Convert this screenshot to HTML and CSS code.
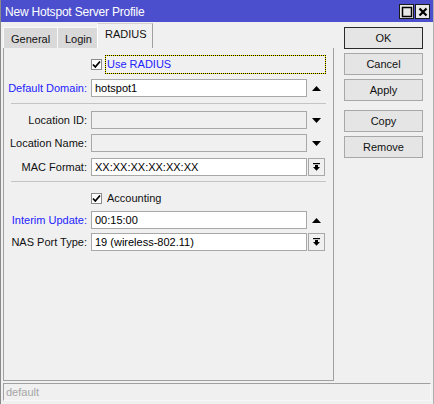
FILE: index.html
```html
<!DOCTYPE html>
<html>
<head>
<meta charset="utf-8">
<link rel="stylesheet" href="styles.css">
</head>
<body>
<div class="window">
  <div class="titlebar">
    <span class="title">New Hotspot Server Profile</span>
    <div class="tbtns">
      <span class="tbtn"><svg width="12" height="12" viewBox="0 0 12 12"><rect x="1.5" y="1.5" width="9" height="9" fill="none" stroke="#000" stroke-width="1.5"/></svg></span>
      <span class="tbtn"><svg width="12" height="12" viewBox="0 0 12 12"><path d="M2.5 2.5 L9.5 9.5 M9.5 2.5 L2.5 9.5" stroke="#000" stroke-width="2.2"/></svg></span>
    </div>
  </div>
  <div class="main">
    <div class="left">
      <div class="tabs">
        <div class="tab">General</div>
        <div class="tab">Login</div>
        <div class="tab active">RADIUS</div>
      </div>
      <div class="panel">
        <div class="row chkrow first">
          <span class="box"><svg width="9" height="9" viewBox="0 0 9 9"><path d="M1 4.5 L3.3 7 L8 1.5" fill="none" stroke="#000" stroke-width="1.8"/></svg></span>
          <span class="focus">Use RADIUS</span>
        </div>
        <div class="row r-dd">
          <label class="lbl blue">Default Domain:</label>
          <div class="field">hotspot1</div>
          <span class="icon"><svg width="9" height="5" viewBox="0 0 9 5"><polygon points="0,5 9,5 4.5,0" fill="#000"/></svg></span>
        </div>
        <div class="sep"></div>
        <div class="row r-lid">
          <label class="lbl">Location ID:</label>
          <div class="field dis"></div>
          <span class="icon"><svg width="9" height="5" viewBox="0 0 9 5"><polygon points="0,0 9,0 4.5,5" fill="#000"/></svg></span>
        </div>
        <div class="row r-lname">
          <label class="lbl">Location Name:</label>
          <div class="field dis"></div>
          <span class="icon"><svg width="9" height="5" viewBox="0 0 9 5"><polygon points="0,0 9,0 4.5,5" fill="#000"/></svg></span>
        </div>
        <div class="row r-mac">
          <label class="lbl">MAC Format:</label>
          <div class="field">XX:XX:XX:XX:XX:XX</div>
          <span class="icon dbtn"><svg width="7" height="8" viewBox="0 0 7 8"><rect x="0" y="0" width="7" height="1.2" fill="#000"/><rect x="2" y="2" width="3" height="2" fill="#000"/><polygon points="0,4 7,4 3.5,7.8" fill="#000"/></svg></span>
        </div>
        <div class="sep sep2"></div>
        <div class="row chkrow r-acc">
          <span class="box"><svg width="9" height="9" viewBox="0 0 9 9"><path d="M1 4.5 L3.3 7 L8 1.5" fill="none" stroke="#000" stroke-width="1.8"/></svg></span>
          <span class="plain">Accounting</span>
        </div>
        <div class="row r-int">
          <label class="lbl blue">Interim Update:</label>
          <div class="field">00:15:00</div>
          <span class="icon"><svg width="9" height="5" viewBox="0 0 9 5"><polygon points="0,5 9,5 4.5,0" fill="#000"/></svg></span>
        </div>
        <div class="row r-nas">
          <label class="lbl">NAS Port Type:</label>
          <div class="field">19 (wireless-802.11)</div>
          <span class="icon dbtn"><svg width="7" height="8" viewBox="0 0 7 8"><rect x="0" y="0" width="7" height="1.2" fill="#000"/><rect x="2" y="2" width="3" height="2" fill="#000"/><polygon points="0,4 7,4 3.5,7.8" fill="#000"/></svg></span>
        </div>
      </div>
    </div>
    <div class="buttons">
      <div class="btn default">OK</div>
      <div class="btn">Cancel</div>
      <div class="btn">Apply</div>
      <div class="btn gapped">Copy</div>
      <div class="btn">Remove</div>
    </div>
  </div>
  <div class="status">default</div>
</div>
</body>
</html>
```

FILE: styles.css
```css
html, body {
  margin: 0;
  padding: 0;
  background: #f0f0f0;
}
body {
  font-family: "Liberation Sans", Arial, sans-serif;
  font-size: 11px;
  color: #000;
}
.window {
  width: 434px;
  height: 404px;
  box-sizing: border-box;
  border-left: 1px solid #8a8a8a;
  border-right: 1px solid #b0b0b0;
  display: flex;
  flex-direction: column;
  overflow: hidden;
}
.titlebar {
  height: 22px;
  background: #4c4fcd;
  display: flex;
  align-items: center;
  justify-content: space-between;
  padding-left: 5px;
  padding-right: 4px;
  margin-left: -1px;
  margin-right: -1px;
}
.title {
  color: #fff;
  font-size: 12px;
  letter-spacing: -0.2px;
  margin-top: 1px;
}
.tbtns {
  display: flex;
  gap: 1px;
  margin-top: 1px;
}
.tbtn {
  width: 13px;
  height: 13px;
  background: #e8e8e8;
  border: 1px solid #1a1a1a;
  display: flex;
  align-items: center;
  justify-content: center;
}
.main {
  display: flex;
  flex: 1;
}
.left {
  margin-left: 2px;
  width: 331px;
  display: flex;
  flex-direction: column;
}
.tabs {
  display: flex;
  height: 25px;
  margin-top: 1px;
  align-items: flex-end;
}
.tab {
  height: 21px;
  box-sizing: border-box;
  background: #d9d9d9;
  border-left: 1px solid #f8f8f8;
  border-top: 1px solid #f8f8f8;
  padding: 0 6px 0 7px;
  display: flex;
  align-items: center;
  padding-top: 2px;
  color: #111;
}
.tab:first-child {
  width: 54px;
}
.tab:nth-child(2) {
  width: 40px;
}
.tab.active {
  height: 25px;
  width: 56px;
  background: #f0f0f0;
  border-left: 1px solid #ffffff;
  border-top: 1px solid #d0d0d0;
  border-right: 1px solid #a0a0a0;
  padding-top: 0;
  padding-bottom: 4px;
  padding-left: 7px;
}
.panel {
  height: 333px;
  box-sizing: border-box;
  border-left: 1px solid #a0a0a0;
  border-right: 1px solid #a0a0a0;
  border-bottom: 1px solid #a0a0a0;
  display: flex;
  flex-direction: column;
}
.row {
  display: flex;
  align-items: center;
  height: 18px;
  margin-top: 5px;
}
.row.first {
  margin-top: 7px;
  height: 19px;
}
.lbl {
  width: 83px;
  text-align: right;
  margin-right: 4px;
  white-space: nowrap;
  color: #111;
}
.lbl.blue {
  color: #2323ff;
}
.field {
  width: 216px;
  height: 18px;
  box-sizing: border-box;
  background: #fff;
  border: 1px solid #a8a8a8;
  padding: 0 0 0 3px;
  line-height: 16px;
  color: #000;
}
.field.dis {
  background: #f0f0f0;
}
.icon {
  width: 17px;
  height: 18px;
  margin-left: 1px;
  display: flex;
  align-items: center;
  justify-content: center;
  box-sizing: border-box;
}
.dbtn {
  border: 1px solid #a8a8a8;
  background: #f0f0f0;
}
.sep {
  height: 1px;
  background: #c4c4c4;
  margin: 6px 0 1px 7px;
  width: 315px;
}
.sep2 {
  margin-top: 5px;
  margin-bottom: 3px;
}
.chkrow {
  padding-left: 87px;
}
.box {
  width: 11px;
  height: 11px;
  box-sizing: border-box;
  border: 1px solid #8c8c8c;
  background: #fff;
  display: flex;
  align-items: center;
  justify-content: center;
  margin-right: 3px;
}
.focus {
  width: 221px;
  height: 19px;
  box-sizing: border-box;
  border: 1px dotted #000;
  background: linear-gradient(#f0f0f0, #f0f0f0) padding-box, #ffff00 border-box;
  padding-left: 1px;
  line-height: 17px;
  color: #2323ff;
}
.plain {
  padding-left: 2px;
  color: #111;
}
.r-dd { margin-top: 5px; }
.r-lid { margin-top: 6px; }
.r-mac { margin-top: 6px; }
.r-acc { margin-top: 4px; }
.r-int { margin-top: 4px; }
.r-nas { margin-top: 4px; }
.buttons {
  margin-left: 10px;
  padding-top: 5px;
  display: flex;
  flex-direction: column;
  gap: 4px;
}
.btn {
  width: 79px;
  height: 22px;
  box-sizing: border-box;
  border: 1px solid #a8a8a8;
  background: #e5e5e5;
  display: flex;
  align-items: center;
  justify-content: center;
  color: #111;
}
.btn.default {
  border: 1px solid #2a2a2a;
}
.btn.gapped {
  margin-top: 5px;
}
.status {
  margin: 2px 2px 3px 2px;
  height: 18px;
  box-sizing: border-box;
  border-top: 1px solid #a0a0a0;
  border-left: 1px solid #a0a0a0;
  border-right: 1px solid #f8f8f8;
  border-bottom: 1px solid #f8f8f8;
  color: #a6a6a6;
  padding-left: 2px;
  line-height: 16px;
}
```
